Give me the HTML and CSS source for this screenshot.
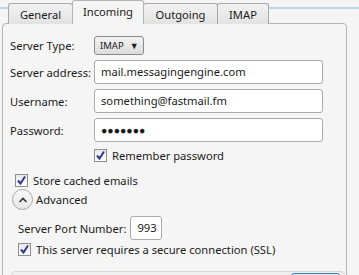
FILE: index.html
```html
<!DOCTYPE html>
<html>
<head>
<title>Account settings</title>
<link rel="stylesheet" href="styles.css">
</head>
<body>
<div class="tabstrip">
  <div class="tab t-general">General</div>
  <div class="tab t-incoming selected">Incoming</div>
  <div class="tab t-outgoing">Outgoing</div>
  <div class="tab t-imap">IMAP</div>
</div>

<div class="panel">
  <div class="form">
    <label class="lbl">Server Type:</label>
    <div><span class="select">IMAP <span class="arrow">&#9660;</span></span></div>

    <label class="lbl">Server address:</label>
    <div class="textbox">mail.messagingengine.com</div>

    <label class="lbl">Username:</label>
    <div class="textbox">something@fastmail.fm</div>

    <label class="lbl">Password:</label>
    <div class="textbox dots">&#9679;&#9679;&#9679;&#9679;&#9679;&#9679;&#9679;</div>

    <div></div>
    <div class="check remember"><span class="box"><svg width="11" height="11" viewBox="0 0 11 11"><path d="M2 5.5 L4.5 8.5 L9 1.5" fill="none" stroke="#2f3a8f" stroke-width="2"/></svg></span>Remember password</div>
  </div>

  <div class="check cached"><span class="box"><svg width="11" height="11" viewBox="0 0 11 11"><path d="M2 5.5 L4.5 8.5 L9 1.5" fill="none" stroke="#2f3a8f" stroke-width="2"/></svg></span>Store cached emails</div>

  <div class="advanced">
    <span class="expander"><svg width="10" height="6" viewBox="0 0 10 6"><path d="M1.5 5 L5 1.5 L8.5 5" fill="none" stroke="#333" stroke-width="1.6"/></svg></span>
    Advanced
  </div>

  <div class="adv-body">
    <div class="port-row">
      <span>Server Port Number:</span>
      <span class="textbox port">993</span>
    </div>
    <div class="check ssl"><span class="box"><svg width="11" height="11" viewBox="0 0 11 11"><path d="M2 5.5 L4.5 8.5 L9 1.5" fill="none" stroke="#2f3a8f" stroke-width="2"/></svg></span>This server requires a secure connection (SSL)</div>
  </div>

  <div class="footer">
    <span class="okbtn"></span>
  </div>
</div>
</body>
</html>
```
FILE: styles.css
```css
body {
  margin: 0;
  height: 275px;
  background: #f5f5f5;
  font-family: "Noto Sans", "Open Sans", sans-serif;
  font-size: 11.2px;
  color: #1a1a1a;
  overflow: hidden;
  white-space: nowrap;
}
.tabstrip {
  display: flex;
  height: 24px;
  padding-left: 8px;
  background: linear-gradient(to bottom, transparent 7px, #c3d3ee 7px, #c3d3ee 9px, transparent 9px);
  position: relative;
  z-index: 1;
}
.tab {
  margin-top: 3px;
  height: 21px;
  line-height: 21px;
  box-sizing: border-box;
  text-align: center;
  border: 1px solid #a8a8a8;
  border-bottom: none;
  border-radius: 3px 3px 0 0;
  background: linear-gradient(#f2f2f2, #e2e2e2);
  margin-right: -1px;
}
.t-general { width: 65px; }
.t-incoming { width: 72px; }
.t-outgoing { width: 75px; }
.t-imap { width: 52px; }
.tab.selected {
  margin-top: 0;
  height: 24px;
  line-height: 22px;
  background: #f5f5f5;
  border-color: #b4b4b4;
  position: relative;
  z-index: 2;
}
.panel {
  margin: -1px 12px 0 2px;
  border: 1px solid #b4b4b4;
  border-radius: 4px 4px 0 0;
  padding: 12px 0 0 7px;
  height: 253px;
  box-sizing: border-box;
  overflow: hidden;
}
.form {
  display: grid;
  grid-template-columns: 84px 229px;
  grid-template-rows: 19px 24px 24px 24px 16px;
  row-gap: 5px;
  align-items: center;
}
.select {
  display: inline-flex;
  align-items: center;
  height: 19px;
  box-sizing: border-box;
  padding: 0 5px;
  border: 1px solid #8a8a8a;
  border-radius: 3px;
  background: linear-gradient(#f2f2f2, #dcdcdc);
  font-size: 9.5px;
  width: 50px;
  vertical-align: top;
}
.arrow {
  font-size: 9px;
  margin-left: 6px;
}
.textbox {
  height: 24px;
  line-height: 22px;
  box-sizing: border-box;
  border: 1px solid #ababab;
  border-radius: 3px;
  background: #fff;
  padding: 0 6px;
}
.dots {
  font-size: 10.5px;
}
.check {
  display: flex;
  align-items: center;
  height: 16px;
}
.box {
  width: 13px;
  height: 13px;
  box-sizing: border-box;
  border: 1px solid #8e8f8f;
  background: linear-gradient(#e8e8e8, #fdfdfd);
  margin-right: 5px;
  display: flex;
  align-items: center;
  justify-content: center;
}
.cached {
  margin: 9px 0 0 5px;
}
.advanced {
  display: flex;
  align-items: center;
  margin: 1px 0 0 2px;
  height: 21px;
}
.expander {
  width: 19px;
  height: 19px;
  border: 1px solid #a9a9a9;
  border-radius: 50%;
  background: linear-gradient(#fafafa, #e6e6e6);
  display: flex;
  align-items: center;
  justify-content: center;
  margin-right: 3px;
}
.adv-body {
  padding-left: 8px;
  margin-top: 6px;
}
.port-row {
  display: flex;
  align-items: center;
}
.port {
  width: 32px;
  margin-left: 4px;
}
.ssl {
  margin-top: 1px;
}
.footer {
  margin: 14px 1px 0 1px;
  height: 20px;
  border: 1px solid #d8d8d8;
  border-radius: 4px;
  background: #efefef;
  position: relative;
}
.okbtn {
  position: absolute;
  right: 4px;
  top: 1px;
  width: 47px;
  height: 16px;
  border: 1px solid #3c7fb1;
  border-radius: 3px;
  background: #e5f1fb;
}
```
